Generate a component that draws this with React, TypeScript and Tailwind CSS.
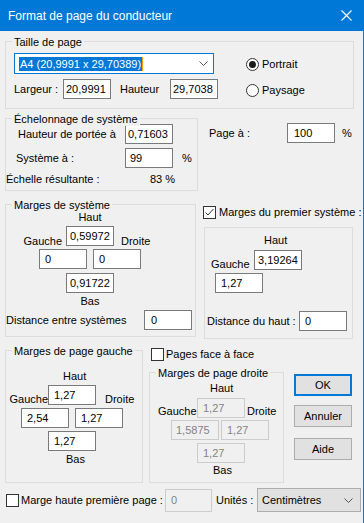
import React from "react";

// Windows-style dialog: "Format de page du conducteur"

function GroupBox({
  label,
  className = "",
  children,
}: {
  label?: string;
  className?: string;
  children?: React.ReactNode;
}) {
  return (
    <div className={`relative border border-[#dcdcdc] ${className}`}>
      {label && (
        <span className="absolute -top-[6px] left-[6px] px-[2px] bg-[#f0f0f0] whitespace-nowrap">
          {label}
        </span>
      )}
      {children}
    </div>
  );
}

function Field({
  value,
  disabled = false,
  pad = "pl-[5px]",
  className = "w-[48px] h-[20px]",
}: {
  value: string;
  disabled?: boolean;
  pad?: string;
  className?: string;
}) {
  return (
    <div
      className={`shrink-0 flex items-center overflow-hidden whitespace-nowrap border ${className} ${pad} ${
        disabled
          ? "border-[#cccccc] bg-[#f0f0f0] text-[#838383]"
          : "border-[#7a7a7a] bg-white text-black"
      }`}
    >
      {value}
    </div>
  );
}

function Radio({ checked, label }: { checked?: boolean; label: string }) {
  return (
    <div className="flex items-center h-[14px]">
      <span className="w-[13px] h-[13px] rounded-full border border-[#333333] bg-white flex items-center justify-center">
        {checked && <span className="w-[7px] h-[7px] rounded-full bg-[#1a1a1a]" />}
      </span>
      <span className="ml-[3px]">{label}</span>
    </div>
  );
}

function CheckBox({ checked }: { checked?: boolean }) {
  return (
    <span className="w-[13px] h-[13px] shrink-0 border border-[#333333] bg-white flex items-center justify-center">
      {checked && (
        <svg width="11" height="11" viewBox="0 0 11 11">
          <polyline points="1.5,5.5 4,8 9.5,2" fill="none" stroke="#333333" strokeWidth="1" />
        </svg>
      )}
    </span>
  );
}

function Button({ label, primary }: { label: string; primary?: boolean }) {
  return (
    <div
      className={`w-[58px] h-[22px] flex items-center justify-center bg-[#e1e1e1] ${
        primary ? "border-2 border-[#0078d7]" : "border border-[#adadad]"
      }`}
    >
      {label}
    </div>
  );
}

function Chevron({ color = "#333333" }: { color?: string }) {
  return (
    <svg width="9" height="5" viewBox="0 0 9 5">
      <polyline points="0.5,0.5 4.5,4.5 8.5,0.5" fill="none" stroke={color} strokeWidth="1" />
    </svg>
  );
}

export default function App() {
  return (
    <div className="w-[364px] h-[523px] bg-[#f0f0f0] border-r border-[#0078d7] overflow-hidden font-['Liberation_Sans',Arial,sans-serif] text-[11px] leading-[13px] text-black">
      {/* Title bar */}
      <div className="h-[31px] bg-[#0078d7] flex items-center justify-between pl-[8px] pr-[11px]">
        <span className="text-white text-[12px] leading-[14px]">Format de page du conducteur</span>
        <svg width="11" height="11" viewBox="0 0 11 11">
          <path d="M0.5 0.5 L10.5 10.5 M10.5 0.5 L0.5 10.5" stroke="white" strokeWidth="1.1" />
        </svg>
      </div>

      {/* Taille de page */}
      <GroupBox label="Taille de page" className="ml-[5px] mt-[10px] w-[349px] h-[68px]">
        <div className="flex">
          <div className="w-[240px] pl-[8px] pt-[11px]">
            <div className="w-[200px] h-[21px] border border-[#0078d7] bg-white flex items-center justify-between pl-[4px] pr-[5px]">
              <span className="bg-[#0078d7] text-white px-[1px] leading-[14px] border-r border-[#f7a100]">
                A4 (20,9991 x 29,70389)
              </span>
              <Chevron color="#555555" />
            </div>
            <div className="flex items-center mt-[5px]">
              <span className="w-[49px]">Largeur :</span>
              <Field value="20,9991" pad="pl-[2px]" />
              <span className="w-[59px] pl-[9px]">Hauteur</span>
              <Field value="29,7038" pad="pl-[2px]" />
            </div>
          </div>
          <div className="pt-[15px] flex flex-col gap-[12px]">
            <Radio checked label="Portrait" />
            <Radio label="Paysage" />
          </div>
        </div>
      </GroupBox>

      {/* Échelonnage + Page à */}
      <div className="flex mt-[9px]">
        <GroupBox label="Échelonnage de système" className="ml-[5px] w-[193px] h-[73px]">
          <div className="flex items-center mt-[5px]">
            <span className="w-[119px] pl-[12px]">Hauteur de portée à</span>
            <Field value="0,71603" pad="pl-[2px]" />
          </div>
          <div className="flex items-center mt-[4px]">
            <span className="w-[119px] pl-[10px]">Système à :</span>
            <Field value="99" pad="pl-[4px]" />
            <span className="ml-[9px]">%</span>
          </div>
          <div className="flex mt-[5px]">
            <span className="w-[144px]">Échelle résultante :</span>
            <span>83 %</span>
          </div>
        </GroupBox>
        <div className="flex items-center ml-[11px] mt-[5px] h-[20px]">
          <span className="w-[78px]">Page à :</span>
          <Field value="100" pad="pl-[6px]" />
          <span className="ml-[7px]">%</span>
        </div>
      </div>

      {/* Marges de système + premier système */}
      <div className="flex items-start mt-[13px]">
        <GroupBox label="Marges de système" className="ml-[5px] w-[191px] h-[133px]">
          <div className="ml-[14px] w-[140px] pt-[6px] flex flex-col items-center">
            <span>Haut</span>
            <div className="flex items-start mt-[2px]">
              <span className="w-[46px] text-right pr-[4px] mt-[9px]">Gauche</span>
              <Field value="0,59972" pad="pl-[3px]" />
              <span className="w-[46px] pl-[7px] mt-[9px]">Droite</span>
            </div>
            <div className="flex gap-[6px] mt-[1px]">
              <Field value="0" pad="pl-[5px]" />
              <Field value="0" pad="pl-[5px]" />
            </div>
            <div className="mt-[4px]">
              <Field value="0,91722" pad="pl-[3px]" />
            </div>
            <span className="mt-[2px]">Bas</span>
          </div>
          <div className="flex items-center mt-[2px]">
            <span className="w-[138px]">Distance entre systèmes</span>
            <Field value="0" pad="pl-[6px]" />
          </div>
        </GroupBox>

        <div className="ml-[7px] w-[150px]">
          <div className="flex items-center mt-[2px]">
            <CheckBox checked />
            <span className="ml-[3px] whitespace-nowrap">Marges du premier système :</span>
          </div>
          <GroupBox className="ml-[1px] mt-[8px] w-[149px] h-[112px]">
            <div className="mt-[6px] pl-[59px]">Haut</div>
            <div className="flex items-start mt-[3px] pl-[6px]">
              <span className="w-[43px] mt-[8px]">Gauche</span>
              <Field value="3,19264" pad="pl-[3px]" />
            </div>
            <div className="mt-[2px] pl-[10px]">
              <Field value="1,27" pad="pl-[5px]" />
            </div>
            <div className="flex items-center mt-[18px] pl-[2px]">
              <span className="w-[92px]">Distance du haut :</span>
              <Field value="0" pad="pl-[5px]" />
            </div>
          </GroupBox>
        </div>
      </div>

      {/* Marges de page */}
      <div className="flex items-start">
        <GroupBox label="Marges de page gauche" className="ml-[5px] mt-[11px] w-[138px] h-[133px]">
          <div className="mt-[19px] pl-[57px]">Haut</div>
          <div className="flex items-start mt-[2px]">
            <span className="w-[42px] text-right mt-[8px]">Gauche</span>
            <Field value="1,27" pad="pl-[5px]" />
            <span className="pl-[9px] mt-[8px]">Droite</span>
          </div>
          <div className="flex gap-[6px] mt-[2px] pl-[15px]">
            <Field value="2,54" pad="pl-[5px]" />
            <Field value="1,27" pad="pl-[5px]" />
          </div>
          <div className="mt-[3px] pl-[42px]">
            <Field value="1,27" pad="pl-[5px]" />
          </div>
          <div className="mt-[2px] pl-[60px]">Bas</div>
        </GroupBox>

        <div className="ml-[6px]">
          <div className="flex items-center mt-[9px] pl-[2px]">
            <CheckBox />
            <span className="ml-[2px]">Pages face à face</span>
          </div>
          <GroupBox label="Marges de page droite" className="mt-[11px] w-[135px] h-[111px]">
            <div className="mt-[9px] pl-[60px]">Haut</div>
            <div className="flex items-start mt-[3px]">
              <span className="w-[47px] pl-[8px] mt-[7px]">Gauche</span>
              <Field value="1,27" disabled pad="pl-[5px]" />
              <span className="pl-[2px] mt-[7px]">Droite</span>
            </div>
            <div className="flex gap-[2px] mt-[2px] pl-[21px]">
              <Field value="1,5875" disabled pad="pl-[4px]" />
              <Field value="1,27" disabled pad="pl-[5px]" />
            </div>
            <div className="mt-[3px] pl-[47px]">
              <Field value="1,27" disabled pad="pl-[5px]" />
            </div>
            <div className="mt-[1px] pl-[63px]">Bas</div>
          </GroupBox>
        </div>

        <div className="ml-[10px] mt-[35px] flex flex-col">
          <Button label="OK" primary />
          <div className="mt-[9px]">
            <Button label="Annuler" />
          </div>
          <div className="mt-[11px]">
            <Button label="Aide" />
          </div>
        </div>
      </div>

      {/* Bottom row */}
      <div className="flex items-center mt-[5px] h-[24px]">
        <span className="ml-[6px]">
          <CheckBox />
        </span>
        <span className="ml-[2px] w-[144px] whitespace-nowrap">Marge haute première page :</span>
        <Field value="0" disabled pad="pl-[5px]" className="w-[47px] h-[23px]" />
        <span className="ml-[4px] w-[41px]">Unités :</span>
        <div className="w-[104px] h-[24px] bg-[#e1e1e1] border border-[#adadad] flex items-center justify-between pl-[4px] pr-[7px]">
          <span>Centimètres</span>
          <Chevron color="#555555" />
        </div>
      </div>
    </div>
  );
}
